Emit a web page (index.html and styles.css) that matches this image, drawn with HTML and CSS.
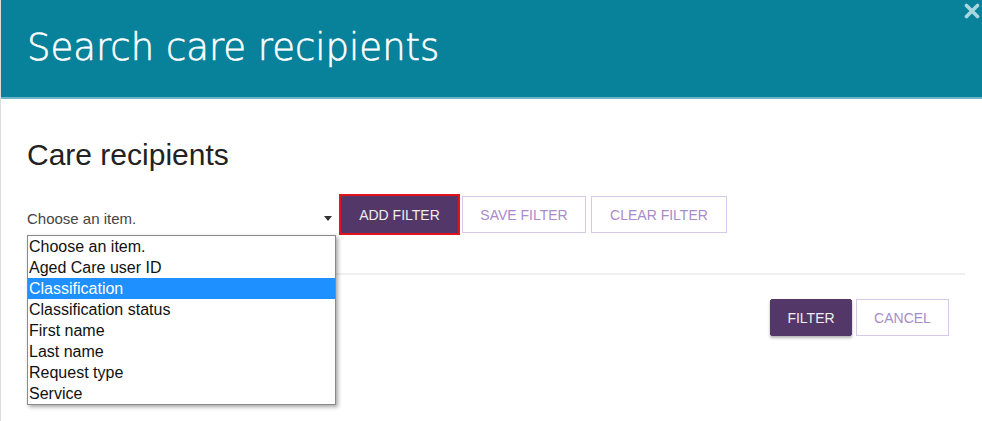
FILE: index.html
```html
<!DOCTYPE html>
<html>
<head>
<meta charset="utf-8">
<link rel="stylesheet" href="styles.css">
</head>
<body>
<div class="modal">
  <header class="modal-header">
    <h1 class="modal-title">Search care recipients</h1>
    <svg class="close" viewBox="0 0 16 16" width="16" height="16" aria-label="Close">
      <path d="M2.5 2.5 L13.5 13.5 M13.5 2.5 L2.5 13.5" stroke="#a9d7e0" stroke-width="3.6" stroke-linecap="round" fill="none"/>
    </svg>
  </header>
  <main class="modal-body">
    <h2 class="section-title">Care recipients</h2>
    <div class="filter-row">
      <div class="select-wrap">
        <div class="select">
          <span class="select-value">Choose an item.</span>
          <span class="caret"></span>
        </div>
        <ul class="dropdown">
          <li>Choose an item.</li>
          <li>Aged Care user ID</li>
          <li class="active">Classification</li>
          <li>Classification status</li>
          <li>First name</li>
          <li>Last name</li>
          <li>Request type</li>
          <li>Service</li>
        </ul>
      </div>
      <button class="btn btn-primary btn-focus">ADD FILTER</button>
      <button class="btn btn-outline btn-save">SAVE FILTER</button>
      <button class="btn btn-outline btn-clear">CLEAR FILTER</button>
    </div>
    <hr class="divider">
    <div class="actions">
      <button class="btn btn-primary btn-filter">FILTER</button>
      <button class="btn btn-outline btn-cancel">CANCEL</button>
    </div>
  </main>
</div>
</body>
</html>
```
FILE: styles.css
```css
* { box-sizing: border-box; }
html, body { margin: 0; padding: 0; background: #fff; }
body { width: 982px; height: 421px; overflow: hidden; font-family: "Liberation Sans", Arial, sans-serif; }

.modal { height: 421px; border-left: 1px solid #dcdcdc; }

.modal-header {
  position: relative;
  height: 99px;
  background: #08819b;
  border-bottom: 2px solid #6bb7c7;
  display: flex;
  align-items: center;
  padding-left: 26px;
}
.modal-title {
  margin: 0;
  font-family: "DejaVu Sans", sans-serif;
  font-weight: 200;
  font-size: 37px;
  color: #fff;
  -webkit-text-stroke: 0.6px #fff;
  padding-bottom: 2px;
}
.close {
  position: absolute;
  right: 2px;
  top: 3px;
  display: block;
}

.modal-body { padding: 39px 17px 0 26px; }
.section-title {
  margin: 0 0 22px;
  font-weight: normal;
  font-size: 30px;
  color: #222;
}

.filter-row { display: flex; align-items: center; }
.select-wrap { position: relative; width: 310px; margin-right: 2px; }
.select {
  display: flex;
  align-items: center;
  justify-content: space-between;
  height: 41px;
  padding: 8px 0 0 0;
  font-size: 15px;
  color: #444;
}
.caret {
  width: 0; height: 0;
  border-left: 4px solid transparent;
  border-right: 4px solid transparent;
  border-top: 5px solid #333;
  margin-right: 5px;
  margin-top: 0px;
}
.dropdown {
  position: absolute;
  left: 0;
  top: 41px;
  width: 309px;
  margin: 0;
  padding: 0;
  list-style: none;
  background: #fff;
  border: 1px solid #8a8a8a;
  box-shadow: 2px 2px 4px rgba(0,0,0,0.35);
  z-index: 5;
}
.dropdown li {
  height: 21px;
  line-height: 21px;
  font-size: 16px;
  color: #111;
  padding-left: 1px;
}
.dropdown li.active { background: #1e90ff; color: #fff; }

.btn {
  font-family: "Liberation Sans", Arial, sans-serif;
  font-size: 14px;
  height: 37px;
  padding: 0;
  background: #fff;
  cursor: pointer;
}
.btn-primary { background: #533769; color: #eee; border: 1px solid #533769; }
.btn-focus { width: 121px; height: 41px; border: 2px solid #e3121c; }
.btn-outline { border: 1px solid #d8c8e8; color: #a88bc8; }
.btn-save { width: 124px; margin-left: 2px; }
.btn-clear { width: 136px; margin-left: 5px; }

.divider {
  margin: 38px 0 0 0;
  border: 0;
  border-top: 2px solid #efefef;
}

.actions { display: flex; justify-content: flex-end; gap: 4px; margin-top: 24px; padding-right: 16px; }
.btn-filter { width: 82px; box-shadow: 0 2px 3px rgba(0,0,0,0.3); border-radius: 2px; }
.btn-cancel { width: 93px; }
```
